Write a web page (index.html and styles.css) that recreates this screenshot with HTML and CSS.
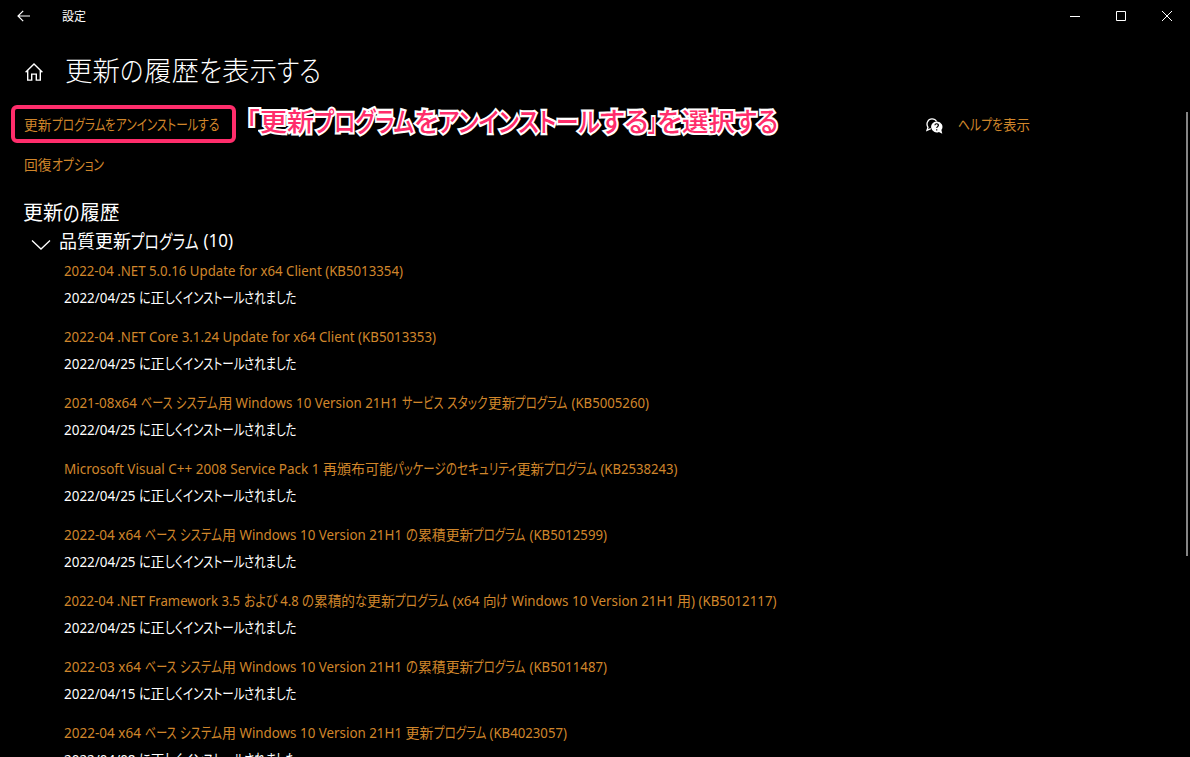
FILE: index.html
```html
<!DOCTYPE html>
<html lang="ja">
<head>
<meta charset="utf-8">
<title>設定</title>
<link rel="stylesheet" href="styles.css">
</head>
<body>
<div class="window">
  <header class="titlebar">
    <svg class="back" width="14" height="12" viewBox="0 0 14 12"><path d="M6.2 .8 1 6l5.2 5.2M1 6h12"/></svg>
    <span class="app-name text" data-runs="24">設定</span>
    <div class="controls">
      <svg width="10" height="10" viewBox="0 0 10 10"><path d="M0 5.5h10"/></svg>
      <svg width="10" height="10" viewBox="0 0 10 10"><path d="M.5 .5h9v9h-9z"/></svg>
      <svg width="10" height="10" viewBox="0 0 10 10"><path d="M0 0l10 10M10 0 0 10"/></svg>
    </div>
  </header>
  <div class="page-head">
    <svg class="home" width="18" height="18" viewBox="0 0 18 18"><path d="M.6 9.2 9 1l8.4 8.2M2.7 7.5v9.6h4v-6h4.6v6h4V7.5"/></svg>
    <h1 class="text" data-runs="55,23.5,55,23,55,44">更新|の|履歴|を|表示|する</h1>
  </div>
  <div class="top-row">
    <a class="uninstall link text" data-runs="27.5,53.5,10.5,82.5,21.5">更新|プログラム|を|アンインストール|する</a>
    <p class="note text" data-runs="13.5,54,100,24,162,48.5,9,24.5,53,43">「|更新|プログラム|を|アンインストール|する|」|を|選択|する</p>
    <div class="help">
      <svg width="17" height="17" viewBox="0 0 17 17">
        <path class="bubble-line" d="M4.800 10.700 1 12.300l1-3C-.4 5.500 2 .9 6 .9c2.200 0 3.700 1 4.600 2.600"/>
        <path class="bubble-fill" d="M10.700 3.400a5.500 5.500 0 1 0 2.200 10.500l3.400 1.800-.9-3.600a5.500 5.500 0 0 0-4.700-8.700z"/>
        <path class="question" d="M8.900 7.300c.1-2.200 3.700-2 3.500.1-.1 1.200-1.700 1.300-1.700 2.700M10.700 11.300v1.200"/>
      </svg>
      <a class="link text" data-runs="34,11,27">ヘルプ|を|表示</a>
    </div>
  </div>
  <a class="recovery link text" data-runs="27.5,52">回復|オプション</a>
  <h2 class="text" data-runs="40,16.5,39.5">更新|の|履歴</h2>
  <div class="group">
    <svg width="20" height="12" viewBox="0 0 20 12"><path d="M1 1.5 10 10l9-8.500"/></svg>
    <h3 class="text" data-runs="72,67.5,34">品質更新|プログラム| (10)</h3>
  </div>
  <ul class="updates" id="updates"></ul>
  <div class="scroll-thumb"></div>
</div>
<script src="app.js"></script>
</body>
</html>
```
FILE: styles.css
```css
* { box-sizing: border-box; }
body { margin: 0; background: #000; color: #fff; overflow: hidden; font-family: "Noto Sans", "Noto Sans CJK JP", sans-serif; }
svg { fill: none; stroke: #fff; stroke-width: 1; display: block; }
h1, h2, h3, p, ul { margin: 0; padding: 0; font-weight: 400; list-style: none; }
.window { position: relative; height: 757px; overflow: hidden; }
.text { display: flex; white-space: pre; }
.run { flex: none; }
.glyphs { display: inline-block; transform-origin: 0 50%; white-space: pre; }
.jp { font-family: "Noto Sans CJK JP", sans-serif; font-feature-settings: "palt"; }
.link { color: #d0862b; font-size: 14px; line-height: 20px; }
.titlebar { display: flex; align-items: center; height: 32px; padding-left: 17px; }
.back { stroke-width: 1.2; }
.app-name { margin-left: 31px; font-size: 12px; line-height: 18px; }
.controls { display: flex; gap: 36px; margin-left: auto; padding-right: 18px; }
.page-head { display: flex; align-items: center; height: 73px; padding: 7px 0 0 25px; }
.home { stroke-width: 1.4; }
h1 { margin: -4px 0 0 22px; font-size: 27px; font-weight: 300; line-height: 40px; }
.top-row { display: flex; height: 39px; padding-left: 11px; align-items: flex-start; }
.uninstall { width: 225px; height: 38px; padding: 5px 0 0 9px; border: 4px solid #ff2d6b; border-radius: 6px; }
.note { margin: -5px 0 0 10px; font-size: 25px; font-weight: 500; line-height: 40px; color: #ff2d6b; -webkit-text-stroke: 4px #fff; paint-order: stroke fill; stroke-linejoin: round; }
.help { display: flex; gap: 15px; margin: 9px 160px 0 auto; }
.help svg { margin-top: 4px; }
.bubble-line { stroke-width: 1.3; }
.bubble-fill { fill: #fff; stroke: none; }
.question { stroke: #000; stroke-width: 1.2; }
.recovery { margin: 10px 0 0 24px; }
h2 { margin: 22px 0 0 23px; font-size: 20px; line-height: 30px; }
.group { display: flex; align-items: center; height: 28px; padding-left: 31px; }
.group svg { margin-top: 5px; stroke-width: 1.3; }
h3 { margin: -3px 0 0 8px; font-size: 18px; line-height: 28px; }
.updates { padding: 5px 0 0 64px; }
.updates li { height: 66px; }
.updates .jp { margin-top: -1px; }
.status { margin-top: 7px; font-size: 14px; line-height: 20px; }
.scroll-thumb { position: absolute; right: 2px; top: 112px; width: 2px; height: 444px; background: #858585; }
```
FILE: app.js
```js
const base = "2022-04 x64 |ベース| |システム|用| Windows 10 Version 21H1 |";
const baseRuns = "80.5,31.5,4,42,14,169.5,";
const updates = [
  ["2022-04 .NET 5.0.16 Update for x64 Client (KB5013354)", "339", "2022/04/25"],
  ["2022-04 .NET Core 3.1.24 Update for x64 Client (KB5013353)", "372", "2022/04/25"],
  ["2021-08x64 |ベース| |システム|用| Windows 10 Version 21H1 |サービス| |スタック|更新|プログラム| (KB5005260)", "76.5,31.5,4,41.5,14.5,169.5,41.5,4,40.5,27.5,52.5,81", "2022/04/25"],
  ["Microsoft Visual C++ 2008 Service Pack 1 |再頒布可能|パッケージ|の|セキュリティ|更新|プログラム| (KB2538243)", "259,70,52.5,11,60,27,53,80.5", "2022/04/25"],
  [base + "の|累積更新|プログラム| (KB5012599)", baseRuns + "12,55.5,52.5,81", "2022/04/25"],
  ["2022-04 .NET Framework 3.5 |および| 4.8 |の|累積的|な|更新|プログラム| (x64 |向|け| Windows 10 Version 21H1 |用|) (KB5012117)", "179.5,33.5,25,12,41,12,28,53.5,34,13.5,11.5,169.5,14,85.5", "2022/04/25"],
  [base.replace("-04", "-03") + "の|累積更新|プログラム| (KB5011487)", baseRuns + "12,55.5,52.5,81", "2022/04/15"],
  [base + "更新|プログラム| (KB4023057)", baseRuns + "28,52.5,81", "2022/04/08"]
];

const list = document.getElementById("updates");
for (const [title, runs, date] of updates) {
  const item = document.createElement("li");
  const link = document.createElement("a");
  link.className = "link text";
  link.dataset.runs = runs;
  link.textContent = title;
  const status = document.createElement("p");
  status.className = "status text";
  status.dataset.runs = "75,11.5,14,18,61.5,52.5";
  status.textContent = date + " |に|正|しく|インストール|されました";
  item.append(link, status);
  list.append(item);
}

for (const line of document.querySelectorAll("[data-runs]")) {
  const widths = line.dataset.runs.split(",").map(Number);
  const parts = line.textContent.split("|");
  line.textContent = "";
  parts.forEach((part, i) => {
    const run = document.createElement("span");
    const glyphs = document.createElement("span");
    run.className = "run";
    glyphs.className = /[^\x00-\x7f]/.test(part) ? "glyphs jp" : "glyphs";
    glyphs.textContent = part;
    run.style.width = widths[i] + "px";
    run.append(glyphs);
    line.append(run);
    const tall = /^[\u3041-\u30ff]+$/.test(part) ? 1.08 : 1;
    glyphs.style.transform = `scale(${widths[i] / glyphs.getBoundingClientRect().width}, ${tall})`;
  });
}
```
